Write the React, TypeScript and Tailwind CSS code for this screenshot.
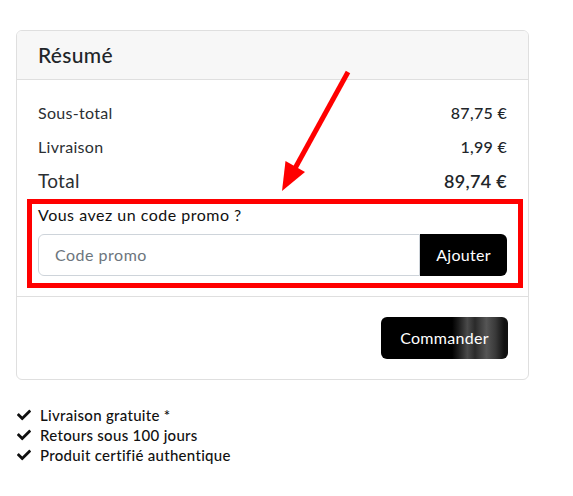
import { FaCheck } from "react-icons/fa";

const rows = [
  { label: "Sous-total", value: "87,75 €" },
  { label: "Livraison", value: "1,99 €" },
];

const perks = [
  "Livraison gratuite *",
  "Retours sous 100 jours",
  "Produit certifié authentique",
];

const App = () => {
  return (
    <div className="relative w-[573px] h-[496px] bg-white font-['Lato',sans-serif] text-[#212529] tracking-[0.3px]">
      <div className="pt-[30px] pl-4 w-[529px]">
        {/* carte résumé */}
        <div className="border border-[#dfdfdf] rounded-md overflow-hidden">
          <div className="h-[49px] bg-[#f7f7f7] border-b border-[#dfdfdf] flex items-center px-[21px]">
            <h2 className="text-[21px] font-medium">Résumé</h2>
          </div>
          <div className="px-[21px] pt-4">
            {rows.map((r) => (
              <div key={r.label} className="h-[34px] flex items-center justify-between">
                <span className="text-[16px] text-[#2b2f33]">{r.label}</span>
                <span className="text-[16px] font-medium">{r.value}</span>
              </div>
            ))}
            <div className="h-[35px] flex items-center justify-between">
              <span className="text-[19px] text-[#2b2f33]">Total</span>
              <span className="text-[18px] font-semibold">89,74 €</span>
            </div>
            <div className="pt-[5px] pb-5">
              <p className="text-[16px] leading-[22px] text-[#111] tracking-[0.5px]">
                Vous avez un code promo ?
              </p>
              <div className="flex mt-2 h-[42px]">
                <input
                  className="flex-1 border border-[#ced4da] rounded-l-[6px] px-4 text-[16px] tracking-[0.5px] placeholder:text-[#6c757d] outline-none"
                  placeholder="Code promo"
                />
                <button className="w-[87px] bg-black text-white text-[16px] rounded-r-[6px]">
                  Ajouter
                </button>
              </div>
            </div>
          </div>
          <div className="border-t border-[#dfdfdf] px-5 pt-[20px] pb-5 flex justify-end">
            <button className="w-[127px] h-[42px] rounded-[6px] text-white text-[16px] bg-[linear-gradient(90deg,#000_0%,#000_56%,#1c1c1c_61%,#4a4a4a_68%,#2a2a2a_74%,#555_83%,#3a3a3a_90%,#111_97%)]">
              Commander
            </button>
          </div>
        </div>

        <ul className="mt-[25px] flex flex-col">
          {perks.map((p) => (
            <li key={p} className="h-5 flex items-center gap-[9px] text-[15px] font-medium text-[#111]">
              <FaCheck className="text-[14px] ml-px" />
              {p}
            </li>
          ))}
        </ul>
      </div>

      {/* annotation */}
      <div className="absolute left-[27px] top-[199px] w-[496px] h-[89px] border-[5px] border-[#ff0000] pointer-events-none" />
      <svg className="absolute left-0 top-0 pointer-events-none" width="573" height="496">
        <line x1="348" y1="72" x2="293" y2="172" stroke="#ff0000" strokeWidth="5" strokeLinecap="butt" />
        <polygon points="282,191 285.5,161 305,172" fill="#ff0000" />
      </svg>
    </div>
  );
};

export default App;
